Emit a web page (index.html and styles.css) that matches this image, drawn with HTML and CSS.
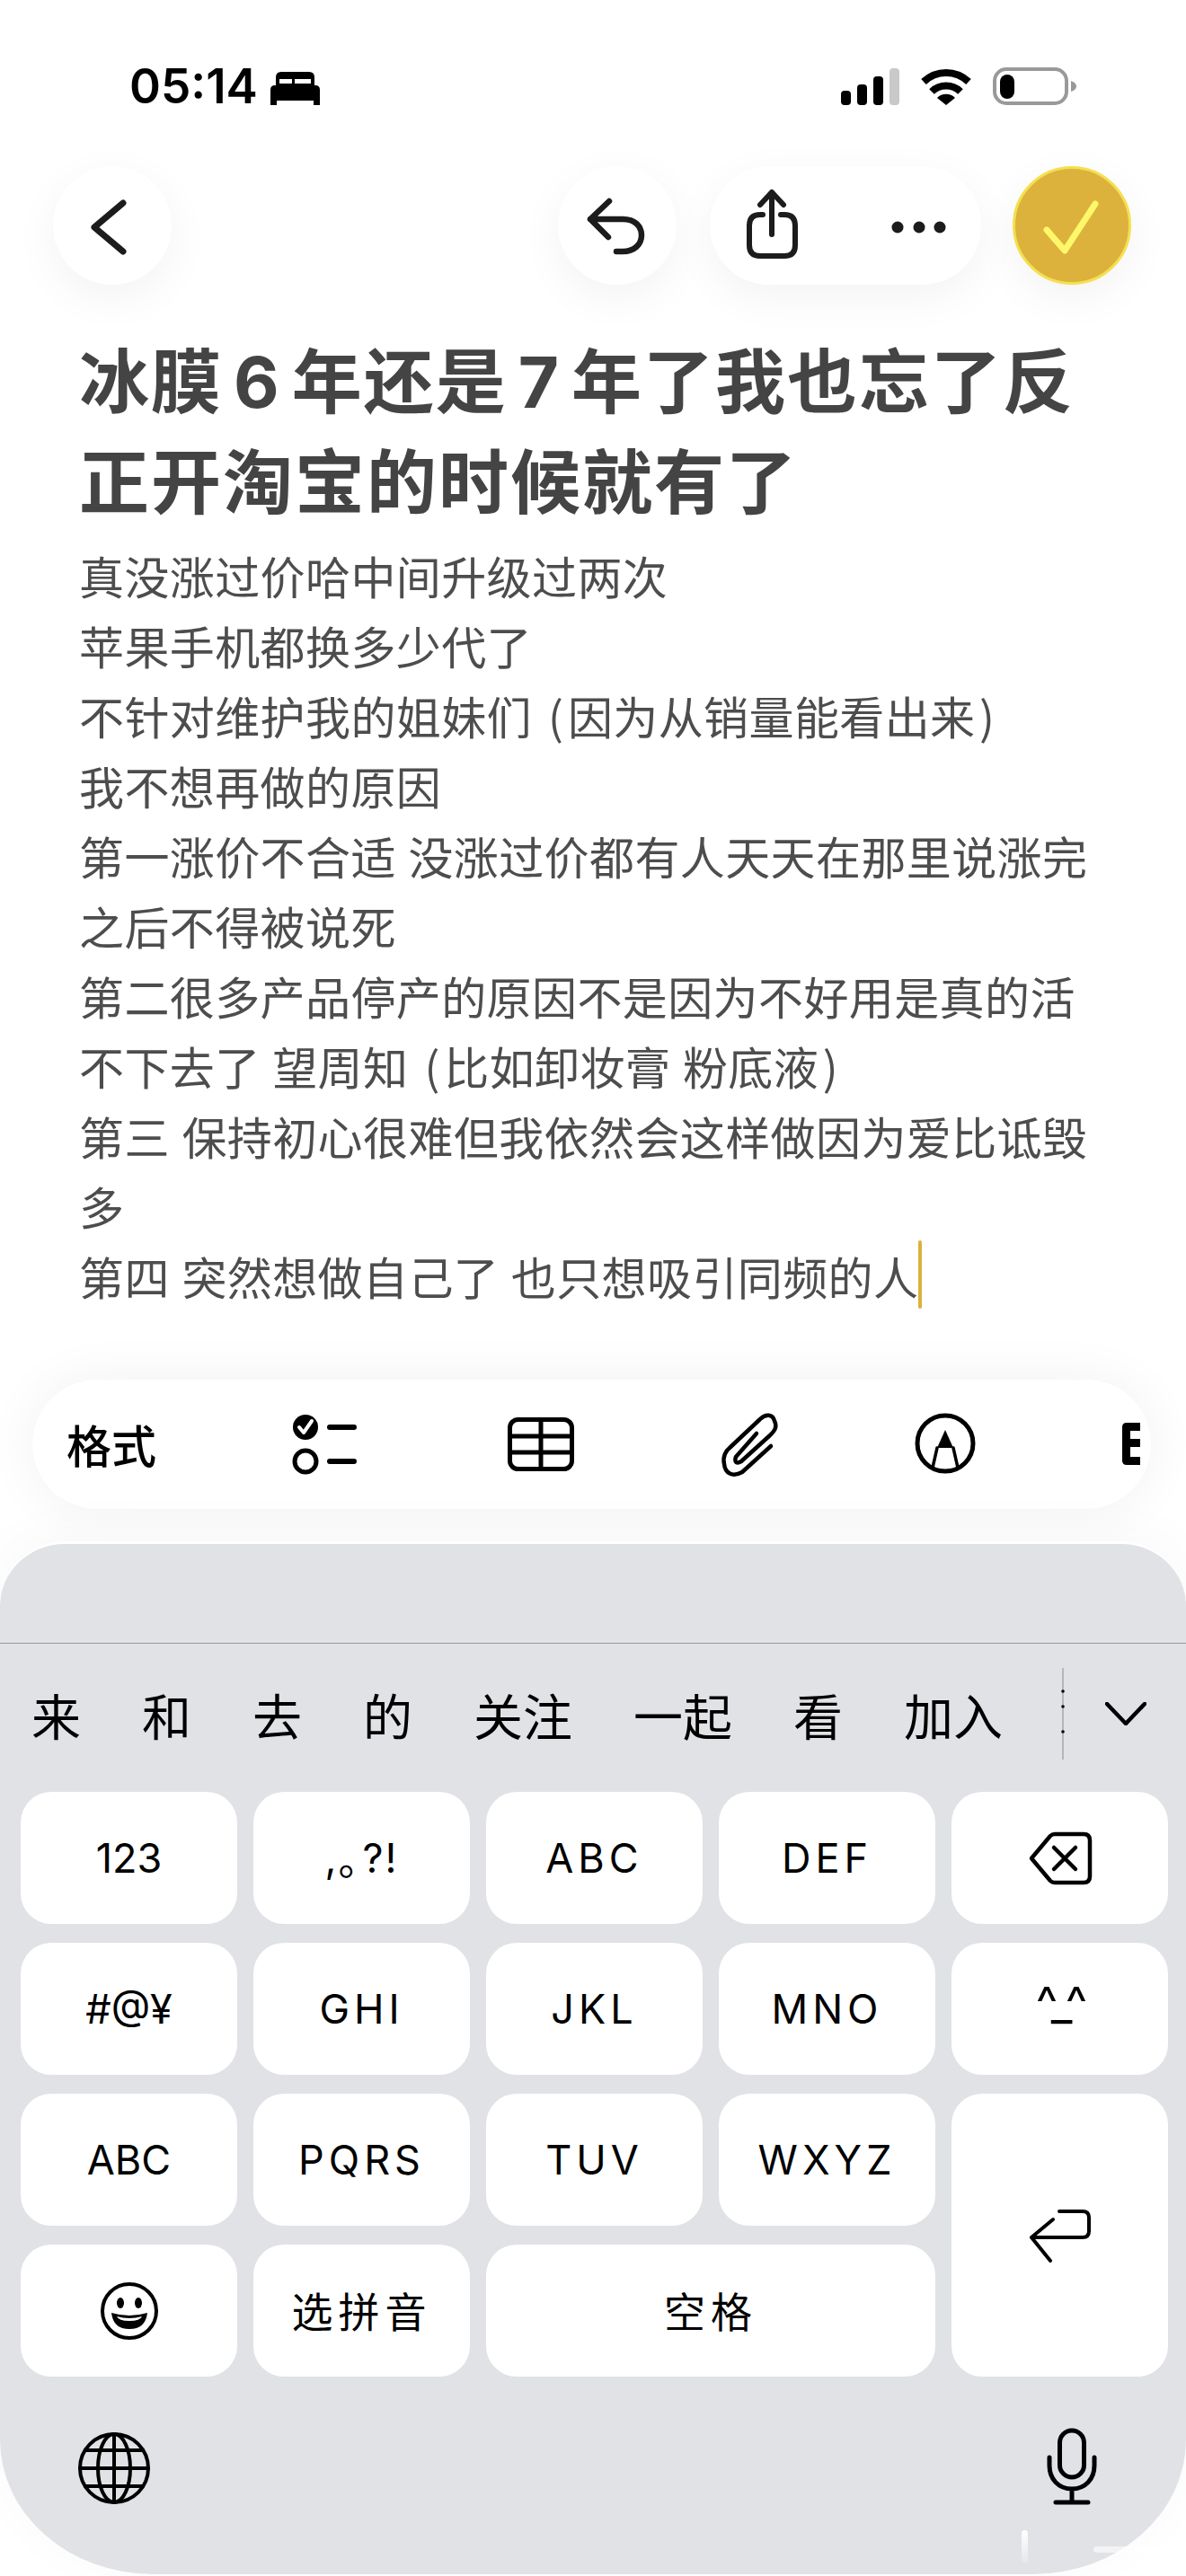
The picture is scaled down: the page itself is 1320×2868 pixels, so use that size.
FILE: index.html
```html
<!DOCTYPE html>
<html lang="zh-CN">
<head>
    <meta charset="UTF-8">
    <title>备忘录</title>
    <link rel="stylesheet" href="styles.css">
</head>
<body>
    <div class="screen">
        <!-- Status bar -->
        <div class="status-bar">
            <div class="status-left">
                <span class="time">05:14</span>
                <svg width="55" height="37" viewBox="0 0 55 37">
                    <path d="M6 15V6q0-6 6-6h31q6 0 6 6v9z" fill="#000"/>
                    <path d="M10 13V8h14v5zM27 13V8h18v5z" fill="#fff"/>
                    <path d="M5 15h45q5 0 5 5v17h-7v-5H7v5H0V20q0-5 5-5z" fill="#000"/>
                </svg>
            </div>
            <div class="status-right">
                <svg width="65" height="41" viewBox="0 0 65 41">
                    <rect x="0" y="25" width="11" height="16" rx="4" fill="#000"/>
                    <rect x="18" y="18" width="11" height="23" rx="4" fill="#000"/>
                    <rect x="36" y="9" width="11" height="32" rx="4" fill="#000"/>
                    <rect x="54" y="0" width="11" height="41" rx="4" fill="#c9c9c9"/>
                </svg>
                <svg width="58" height="41" viewBox="0 0 58 41">
                    <path d="M4 15A36 36 0 0 1 54 15" fill="none" stroke="#000" stroke-width="8"/>
                    <path d="M13 26A23 23 0 0 1 45 26" fill="none" stroke="#000" stroke-width="8"/>
                    <path d="M29 41L19 33A14 14 0 0 1 39 33z" fill="#000"/>
                </svg>
                <svg class="battery" width="93" height="42" viewBox="0 0 93 42">
                    <rect x="2" y="2" width="80" height="38" rx="13" fill="none" stroke="#999" stroke-width="4"/>
                    <rect x="8" y="8" width="16" height="27" rx="8" fill="#000"/>
                    <path d="M87 15q6 2 6 6t-6 6z" fill="#999"/>
                </svg>
            </div>
        </div>

        <!-- Top buttons -->
        <div class="nav">
            <div class="nav-btn">
                <svg width="132" height="132" viewBox="0 0 132 132">
                    <path d="M78 41L46 68L78 95" class="line" stroke-width="7"/>
                </svg>
            </div>
            <div class="nav-right">
                <div class="nav-btn">
                    <svg width="130" height="132" viewBox="0 0 130 132">
                        <path d="M57 39L36 59L56 79M36 59H72C86 59 93 67 93 77C93 87 85 95 72 95H65" class="line" stroke-width="6.5"/>
                    </svg>
                </div>
                <div class="nav-pill">
                    <svg width="140" height="132" viewBox="0 0 140 132">
                        <path d="M69 76V29M56 43L69 29L82 43M59 54H56Q44 54 44 66V88Q44 100 56 100H83Q95 100 95 88V66Q95 54 83 54H79" class="line" stroke-width="6"/>
                    </svg>
                    <svg width="162" height="132" viewBox="0 0 162 132">
                        <circle cx="69" cy="68" r="6.5" fill="#1c1c1c"/>
                        <circle cx="93" cy="68" r="6.5" fill="#1c1c1c"/>
                        <circle cx="116" cy="68" r="6.5" fill="#1c1c1c"/>
                    </svg>
                </div>
                <div class="nav-done">
                    <svg width="126" height="126" viewBox="3 3 126 126">
                        <path d="M38 71L58 94L92 42" class="line-done" stroke-width="7"/>
                    </svg>
                </div>
            </div>
        </div>

        <!-- Note -->
        <div class="note">
            <h1 class="note-title">
                <div>冰膜<span class="digit">6</span>年还是<span class="digit">7</span>年了我也忘了反</div>
                <div>正开淘宝的时候就有了</div>
            </h1>
            <div class="note-body">
                <div>真没涨过价哈中间升级过两次</div>
                <div>苹果手机都换多少代了</div>
                <div>不针对维护我的姐妹们 <span class="paren">(</span>因为从销量能看出来<span class="paren">)</span></div>
                <div>我不想再做的原因</div>
                <div>第一涨价不合适 没涨过价都有人天天在那里说涨完</div>
                <div>之后不得被说死</div>
                <div>第二很多产品停产的原因不是因为不好用是真的活</div>
                <div>不下去了 望周知 <span class="paren">(</span>比如卸妆膏 粉底液<span class="paren">)</span></div>
                <div>第三 保持初心很难但我依然会这样做因为爱比诋毁</div>
                <div>多</div>
                <div>第四 突然想做自己了 也只想吸引同频的人<span class="caret"></span></div>
            </div>
        </div>

        <!-- Format toolbar -->
        <div class="toolbar">
            <span class="toolbar-label">格式</span>
            <svg width="308" height="144" viewBox="0 0 308 144">
                <circle cx="168" cy="53" r="14" fill="#000"/>
                <path d="M161 53L166 59L175 46" fill="none" stroke="#fff" stroke-width="4" stroke-linecap="round" stroke-linejoin="round"/>
                <circle cx="168" cy="91" r="12" fill="none" stroke="#000" stroke-width="5"/>
                <path d="M195 53H222M195 91H222" class="line-tool" stroke-width="6"/>
            </svg>
            <svg width="240" height="144" viewBox="0 0 240 144">
                <rect x="87.5" y="44.5" width="69" height="55" rx="9" fill="none" stroke="#000" stroke-width="5"/>
                <path d="M122 45V99M88 63H156M88 81H156" fill="none" stroke="#000" stroke-width="5"/>
            </svg>
            <svg width="220" height="144" viewBox="0 0 220 144">
                <path d="M138 74L106 103C95 109 87 104 86 94C84 86 88 79 92 76L126 44C132 38 140 38 142 46C146 54 140 59 137 62L105 91C100 94 97 92 99 86L122 60" class="line-tool" stroke-width="4.5"/>
            </svg>
            <svg width="220" height="144" viewBox="0 0 220 144">
                <circle cx="112" cy="71" r="31" fill="none" stroke="#000" stroke-width="5"/>
                <path d="M112 56L103 76H121z" fill="#000"/>
                <path d="M103 76L98 98M121 76L126 98" class="line-tool" stroke-width="3.5"/>
            </svg>
            <svg width="121" height="144" viewBox="0 0 121 144">
                <path d="M94 48H109V57H98V66H109V75H98V86H109V95H94Q89 95 89 90V53Q89 48 94 48z" fill="#000"/>
            </svg>
        </div>

        <!-- Keyboard -->
        <div class="keyboard">
            <div class="kb-top"></div>
            <div class="candidates">
                <div class="candidate-list">
                    <span>来</span><span>和</span><span>去</span><span>的</span><span>关注</span><span>一起</span><span>看</span><span>加入</span>
                </div>
                <svg class="candidate-sep" width="6" height="102" viewBox="0 0 6 102">
                    <rect x="2" y="0" width="2" height="102" fill="#b5b6ba"/>
                    <circle cx="3" cy="26" r="1.8" fill="#000"/>
                    <circle cx="3" cy="43" r="1.8" fill="#000"/>
                    <circle cx="3" cy="71" r="1.8" fill="#000"/>
                </svg>
                <svg width="46" height="26" viewBox="0 0 46 26">
                    <path d="M2 2L23 24L44 2" class="line-key" stroke-width="4.5"/>
                </svg>
            </div>

            <div class="keys">
                <div class="key num">123</div>
                <div class="key sym"><span>,</span><span class="narrow">。</span><span>?!</span></div>
                <div class="key">ABC</div>
                <div class="key">DEF</div>
                <div class="key">
                    <svg width="72" height="60" viewBox="0 0 72 60">
                        <path d="M4 30L25 5Q27 3 30 3H62Q69 3 69 10V50Q69 57 62 57H30Q27 57 25 55z" class="line-key" stroke-width="4.5"/>
                        <path d="M29 18L53 42M53 18L29 42" class="line-key" stroke-width="4.5"/>
                    </svg>
                </div>

                <div class="key num">#@¥</div>
                <div class="key">GHI</div>
                <div class="key">JKL</div>
                <div class="key">MNO</div>
                <div class="key num face">^_^</div>

                <div class="key num">ABC</div>
                <div class="key">PQRS</div>
                <div class="key">TUV</div>
                <div class="key">WXYZ</div>
                <div class="key key-return">
                    <svg width="70" height="60" viewBox="0 0 70 60">
                        <path d="M34 3H60Q67 3 67 10V25Q67 32 60 32H3M27 12L3 32L24 58" class="line-key" stroke-width="4"/>
                    </svg>
                </div>

                <div class="key">
                    <svg width="66" height="66" viewBox="0 0 66 66">
                        <circle cx="33" cy="33" r="30" fill="none" stroke="#000" stroke-width="4"/>
                        <ellipse cx="23" cy="24" rx="4" ry="6" fill="#000"/>
                        <ellipse cx="43" cy="24" rx="4" ry="6" fill="#000"/>
                        <path d="M13 35Q33 41 53 35Q51 53 33 53Q15 53 13 35z" fill="#000"/>
                        <path d="M19 39Q33 43 47 39Q45 44 33 44Q21 44 19 39z" fill="#fff"/>
                    </svg>
                </div>
                <div class="key cjk">选拼音</div>
                <div class="key cjk key-space">空格</div>
            </div>

            <div class="kb-bottom">
                <svg width="82" height="82" viewBox="0 0 82 82">
                    <circle cx="41" cy="41" r="38" class="line-key" stroke-width="4"/>
                    <ellipse cx="41" cy="41" rx="18" ry="38" class="line-key" stroke-width="4"/>
                    <path d="M41 3V79M3 41H79M9 21H73M9 61H73" class="line-key" stroke-width="4"/>
                </svg>
                <svg width="58" height="86" viewBox="0 0 58 86">
                    <rect x="15.5" y="3" width="27" height="52" rx="13.5" class="line-key" stroke-width="5"/>
                    <path d="M4 33V42C4 57 14 68 29 68C44 68 54 57 54 42V33M29 68V83M11 83H47" class="line-key" stroke-width="5"/>
                </svg>
            </div>

            <div class="mark-bar"></div>
            <div class="mark-line"></div>
        </div>
    </div>
</body>
</html>
```

FILE: styles.css
```css
* {
    box-sizing: border-box;
}
body {
    margin: 0;
    background: #fff;
    font-family: "Noto Sans CJK SC", "Noto Sans", sans-serif;
}
svg {
    display: block;
    flex: none;
}
.line, .line-done, .line-tool, .line-key {
    fill: none;
    stroke-linecap: round;
    stroke-linejoin: round;
}
.line {
    stroke: #1c1c1c;
}
.line-done {
    stroke: #fdf76a;
}
.line-tool, .line-key {
    stroke: #000;
}
.screen {
    width: 1320px;
    height: 2868px;
    overflow: hidden;
    display: flex;
    flex-direction: column;
}
.status-bar {
    height: 185px;
    padding: 75px 122px 0 144px;
    display: flex;
    justify-content: space-between;
    align-items: flex-start;
}
.status-left {
    display: flex;
    align-items: flex-end;
    gap: 14px;
    height: 42px;
}
.time {
    font-family: Inter, sans-serif;
    font-weight: 600;
    font-size: 53px;
    line-height: 42px;
    color: #000;
}
.status-right {
    display: flex;
    align-items: flex-end;
    gap: 23px;
    height: 42px;
}
.nav {
    height: 132px;
    padding: 0 61px 0 59px;
    display: flex;
    justify-content: space-between;
}
.nav-right {
    display: flex;
    gap: 37px;
}
.nav-btn, .nav-pill {
    height: 132px;
    background: #fff;
    border-radius: 66px;
    box-shadow: 0 14px 50px rgba(0,0,0,0.05);
}
.nav-btn {
    width: 132px;
}
.nav-pill {
    width: 302px;
    display: flex;
}
.nav-done {
    width: 132px;
    height: 132px;
    margin-left: -2px;
    border-radius: 50%;
    background: #dcb13c;
    border: 3px solid #f3e04e;
    box-shadow: 0 14px 50px rgba(0,0,0,0.05);
}
.note {
    padding: 47px 80px 0 88px;
}
.note-title {
    margin: 0;
    font-size: 78px;
    font-weight: 700;
    line-height: 112px;
    letter-spacing: 2px;
    white-space: nowrap;
    color: #444;
}
.digit {
    margin: 0 12px;
    font-family: Inter, sans-serif;
    line-height: 1;
}
.note-body {
    margin-top: 13px;
    font-size: 50px;
    line-height: 78px;
    letter-spacing: 0.4px;
    word-spacing: 2px;
    white-space: nowrap;
    color: #4d4d4d;
}
.paren {
    margin: 0 4.5px;
}
.caret {
    display: inline-block;
    width: 4px;
    height: 76px;
    vertical-align: -15px;
    background: #dcb13c;
    border-radius: 2px;
}
.toolbar {
    margin: 77px 39px 0 36px;
    height: 144px;
    border-radius: 72px;
    background: #fff;
    box-shadow: 0 0 60px rgba(0,0,0,0.06);
    display: flex;
    align-items: center;
    padding-left: 38px;
    overflow: hidden;
}
.toolbar-label {
    width: 98px;
    flex: none;
    white-space: nowrap;
    font-size: 50px;
    font-weight: 500;
    line-height: 60px;
    padding-bottom: 2px;
    color: #000;
}
.keyboard {
    position: relative;
    margin-top: 36px;
    height: 1150px;
    background: #e1e2e6;
    border-top: 3px solid #fff;
    border-radius: 72px 72px 170px 170px / 72px 72px 150px 150px;
    box-shadow: 0 -10px 60px rgba(0,0,0,0.03);
}
.kb-top {
    height: 111px;
    border-bottom: 1px solid #97989c;
}
.candidates {
    height: 160px;
    padding: 0 44px 4px 35px;
    display: flex;
    align-items: center;
    gap: 44px;
}
.candidate-list {
    display: flex;
    gap: 68px;
    font-size: 55px;
    line-height: 80px;
    color: #000;
}
.candidate-sep {
    margin-left: auto;
}
.keys {
    margin-top: 5px;
    padding: 0 20px 0 23px;
    display: grid;
    grid-template-columns: repeat(5, 1fr);
    grid-auto-rows: 147px;
    gap: 21px 18px;
}
.key {
    background: #fff;
    border-radius: 34px;
    display: flex;
    align-items: center;
    justify-content: center;
    font-family: Inter, sans-serif;
    font-size: 45px;
    letter-spacing: 5px;
    color: #000;
}
.key.num {
    letter-spacing: 0;
}
.key.sym {
    letter-spacing: 2px;
}
.narrow {
    margin-right: -20px;
    font-family: "Noto Sans CJK SC", sans-serif;
}
.key.face {
    font-size: 52px;
    letter-spacing: -4px;
    padding-bottom: 12px;
}
.key.cjk {
    font-family: "Noto Sans CJK SC", sans-serif;
    font-size: 46px;
    letter-spacing: 6px;
    padding-bottom: 4px;
}
.key-space {
    grid-column: span 2;
}
.key-return {
    grid-row: 3 / span 2;
    grid-column: 5;
}
.kb-bottom {
    margin-top: 57px;
    padding: 0 98px 0 86px;
    display: flex;
    justify-content: space-between;
    align-items: flex-end;
}
.mark-bar {
    position: absolute;
    left: 1137px;
    top: 1098px;
    width: 7px;
    height: 36px;
    border-radius: 4px;
    background: linear-gradient(#fff, #e6e7ea);
}
.mark-line {
    position: absolute;
    left: 1217px;
    top: 1116px;
    width: 91px;
    height: 7px;
    border-radius: 4px;
    background: rgba(255,255,255,0.6);
}
```
